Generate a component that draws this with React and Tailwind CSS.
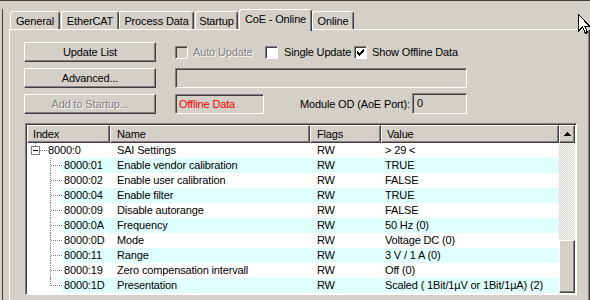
import React from "react";

const RAISED =
  "border border-t-white border-l-white border-r-[#404040] border-b-[#404040] shadow-[inset_-1px_-1px_0_#808080]";
const SUNKEN =
  "border border-t-[#808080] border-l-[#808080] border-r-white border-b-white shadow-[inset_1px_1px_0_#404040]";
const DIS = "text-[#808080] [text-shadow:1px_1px_0_#ffffff]";

function Btn({ children, disabled }) {
  return (
    <div className={`h-[20px] flex items-center justify-center ${RAISED} ${disabled ? DIS : ""}`}>
      {children}
    </div>
  );
}

function Check({ checked, disabled }) {
  return (
    <div className={`w-[13px] h-[13px] shrink-0 flex items-center justify-center ${SUNKEN} ${disabled ? "bg-[#d4d0c8]" : "bg-white"}`}>
      {checked && (
        <svg width="7" height="7" viewBox="0 0 7 7">
          <path d="M0 2h1v1h1v1h1v-1h1v-1h1v-1h1v-1h1v3h-1v1h-1v1h-1v1h-1v1h-1v-1h-1v-1h-1v-1h-1z" fill="#000" />
        </svg>
      )}
    </div>
  );
}

function Tab({ label, w, ml, selected }) {
  return (
    <div
      className={`${w} ${ml} flex items-center justify-center border-t border-l border-r border-t-white border-l-white border-r-[#404040] shadow-[inset_-1px_0_0_#808080] rounded-t-[3px] bg-[#d4d0c8] ${
        selected ? "relative z-10 h-[22px] -mb-[2px] pb-[3px]" : "h-[18px] pt-[1px]"
      }`}
    >
      {label}
    </div>
  );
}

const children = [
  ["8000:01", "Enable vendor calibration", "TRUE"],
  ["8000:02", "Enable user calibration", "FALSE"],
  ["8000:04", "Enable filter", "TRUE"],
  ["8000:09", "Disable autorange", "FALSE"],
  ["8000:0A", "Frequency", "50 Hz (0)"],
  ["8000:0D", "Mode", "Voltage DC (0)"],
  ["8000:11", "Range", "3 V / 1 A (0)"],
  ["8000:19", "Zero compensation intervall", "Off (0)"],
  ["8000:1D", "Presentation", "Scaled ( 1Bit/1µV or 1Bit/1µA) (2)"],
];

const HEAD = `h-[18px] flex items-center ${RAISED} whitespace-nowrap overflow-hidden`;

export default function App() {
  return (
    <div className="relative w-[590px] h-[300px] overflow-hidden bg-[#d4d0c8] border-t border-t-[#404040] font-['Liberation_Sans',Arial,sans-serif] text-[11px] leading-[13px] tracking-[-0.15px] text-black">
      <div className="ml-[2px] h-full border-l border-l-[#404040]">
        {/* tabs */}
        <div className="flex items-end h-[20px] mt-[8px] pl-[7px]">
          <Tab label="General" w="w-[50px]" ml="" />
          <Tab label="EtherCAT" w="w-[58px]" ml="ml-[1px]" />
          <Tab label="Process Data" w="w-[75px]" ml="" />
          <Tab label="Startup" w="w-[43px]" ml="ml-[1px]" />
          <Tab label="CoE - Online" w="w-[73px]" ml="ml-[1px]" selected />
          <Tab label="Online" w="w-[42px]" ml="" />
        </div>

        {/* panel */}
        <div className="ml-[6px] h-[300px] border-t border-l border-r border-t-white border-l-white border-r-[#404040] shadow-[inset_-1px_0_0_#808080] pl-[14px] pt-[12px]">
          <div className="flex">
            <div className="flex flex-col gap-[6px] w-[132px]">
              <Btn>Update List</Btn>
              <Btn>Advanced...</Btn>
              <Btn disabled>Add to Startup...</Btn>
            </div>
            <div className="ml-[19px] w-[292px] flex flex-col gap-[6px]">
              <div className="h-[20px] flex items-center">
                <div className="w-[90px] flex items-center">
                  <Check disabled />
                  <span className={`ml-[5px] ${DIS}`}>Auto Update</span>
                </div>
                <div className="w-[89px] flex items-center">
                  <Check />
                  <span className="ml-[6px] whitespace-nowrap">Single Update</span>
                </div>
                <div className="flex items-center">
                  <Check checked />
                  <span className="ml-[5px] whitespace-nowrap">Show Offline Data</span>
                </div>
              </div>
              <div className={`h-[20px] ${SUNKEN}`} />
              <div className="h-[20px] flex items-center">
                <div className={`w-[89px] h-[20px] flex items-center pl-[3px] text-[#ff0000] ${SUNKEN}`}>
                  Offline Data
                </div>
                <span className="ml-[36px] whitespace-nowrap">Module OD (AoE Port):</span>
                <div className={`ml-auto w-[55px] h-[21px] -mt-[1px] flex items-center pl-[4px] ${SUNKEN}`}>0</div>
              </div>
            </div>
          </div>

          {/* list view */}
          <div className={`mt-[9px] ml-[1px] w-[552px] h-[172px] p-px bg-white ${SUNKEN}`}>
            <div className="flex h-full">
              <div className="flex-1 flex flex-col">
                <div className="flex bg-[#d4d0c8]">
                  <div className={`w-[83px] pl-[5px] ${HEAD}`}>Index</div>
                  <div className={`w-[200px] pl-[6px] ${HEAD}`}>Name</div>
                  <div className={`w-[71px] pl-[6px] ${HEAD}`}>Flags</div>
                  <div className={`flex-1 pl-[5px] ${HEAD}`}>Value</div>
                </div>
                {/* root row */}
                <div className="flex h-[15px] items-center whitespace-nowrap">
                  <div className="w-[83px] h-full flex items-center relative">
                    <div className="absolute left-[8px] top-0 h-[3px] border-l border-dotted border-l-[#808080]" />
                    <div className="ml-[4px] w-[9px] h-[9px] border border-[#808080] bg-white flex items-center justify-center">
                      <div className="w-[5px] h-px bg-black" />
                    </div>
                    <div className="w-[7px] border-t border-dotted border-t-[#808080]" />
                    <span className="ml-[1px]">8000:0</span>
                  </div>
                  <div className="w-[200px] pl-[7px]">SAI Settings</div>
                  <div className="w-[71px] pl-[7px]">RW</div>
                  <div className="flex-1 pl-[4px]">&gt; 29 &lt;</div>
                </div>
                {children.map(([idx, name, val], i) => {
                  const hl = i % 2 === 0;
                  const last = i === children.length - 1;
                  return (
                    <div key={idx} className="flex h-[15px] whitespace-nowrap">
                      <div className="w-[35px] h-full flex">
                        <div className="w-[23px]" />
                        <div className="relative w-[12px] h-full">
                          <div
                            className={`absolute left-0 top-0 border-l border-dotted border-l-[#808080] ${
                              last ? "h-[8px]" : "h-full"
                            }`}
                          />
                          <div className="absolute left-px top-[7px] w-[11px] border-t border-dotted border-t-[#808080]" />
                        </div>
                      </div>
                      <div className={`flex-1 flex items-center ${hl ? "bg-[#e0ffff]" : ""}`}>
                        <div className="w-[48px] pl-[2px]">{idx}</div>
                        <div className="w-[200px] pl-[7px]">{name}</div>
                        <div className="w-[71px] pl-[7px]">RW</div>
                        <div className="flex-1 pl-[4px] overflow-hidden">{val}</div>
                      </div>
                    </div>
                  );
                })}
              </div>
              {/* scrollbar */}
              <div className="w-[16px] flex flex-col">
                <div className={`h-[18px] bg-[#d4d0c8] flex items-center justify-center ${RAISED}`}>
                  <svg width="7" height="4" viewBox="0 0 7 4">
                    <path d="M3 0h1v1h1v1h1v1h1v1h-7v-1h1v-1h1v-1h1z" fill="#000" />
                  </svg>
                </div>
                <div className="h-[97px] bg-[repeating-conic-gradient(#d4d0c8_0_25%,#ffffff_0_50%)] bg-[length:2px_2px]" />
                <div className={`flex-1 bg-[#d4d0c8] ${RAISED}`} />
              </div>
            </div>
          </div>
        </div>
      </div>

      {/* mouse cursor */}
      <svg className="absolute left-[578px] top-[13px]" width="13" height="21" viewBox="0 0 13 21">
        <path d="M0.5 0.5 V17 L4.5 13 L7.5 19.5 L9.5 18.5 L6.8 12.5 H12 Z" fill="#fff" stroke="#000" strokeWidth="1" shapeRendering="crispEdges" />
      </svg>
    </div>
  );
}
